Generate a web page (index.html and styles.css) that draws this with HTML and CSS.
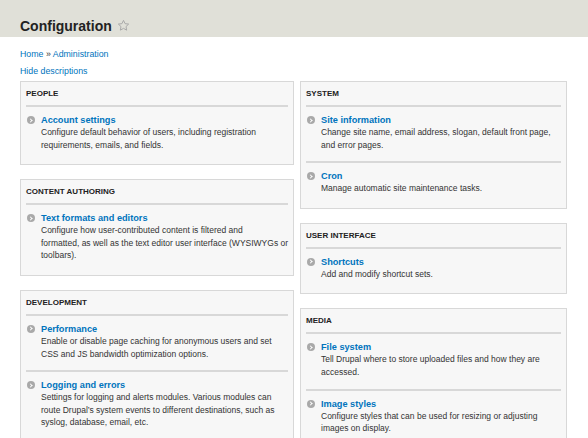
FILE: index.html
```html
<!DOCTYPE html>
<html lang="en">
<head>
    <meta charset="UTF-8">
    <title>Configuration</title>
    <link rel="stylesheet" href="styles.css">
</head>
<body>
    <div class="page-header">
        <h1 class="page-title">Configuration
            <svg class="star" width="13" height="13" viewBox="0 0 24 24"><path d="M12 2.5l2.9 6.1 6.6.8-4.9 4.6 1.3 6.6L12 17.3l-5.9 3.3 1.3-6.6-4.9-4.6 6.6-.8z" fill="none" stroke="#a8a8a8" stroke-width="1.8" stroke-linejoin="round"/></svg>
        </h1>
    </div>

    <div class="content">
        <div class="breadcrumb"><a href="#">Home</a> » <a href="#">Administration</a></div>
        <div class="toggle"><a href="#">Hide descriptions</a></div>

        <div class="columns">
            <div class="column">
                <div class="panel">
                    <h3 class="panel-title">People</h3>
                    <div class="item">
                        <a class="item-link" href="#"><span class="bullet"></span>Account settings</a>
                        <div class="item-desc">Configure default behavior of users, including registration requirements, emails, and fields.</div>
                    </div>
                </div>

                <div class="panel">
                    <h3 class="panel-title">Content authoring</h3>
                    <div class="item">
                        <a class="item-link" href="#"><span class="bullet"></span>Text formats and editors</a>
                        <div class="item-desc tight">Configure how user-contributed content is filtered and<br>formatted, as well as the text editor user interface (WYSIWYGs or<br>toolbars).</div>
                    </div>
                </div>

                <div class="panel">
                    <h3 class="panel-title">Development</h3>
                    <div class="item">
                        <a class="item-link" href="#"><span class="bullet"></span>Performance</a>
                        <div class="item-desc">Enable or disable page caching for anonymous users and set CSS and JS bandwidth optimization options.</div>
                    </div>
                    <div class="item">
                        <a class="item-link" href="#"><span class="bullet"></span>Logging and errors</a>
                        <div class="item-desc">Settings for logging and alerts modules. Various modules can route Drupal’s system events to different destinations, such as syslog, database, email, etc.</div>
                    </div>
                    <div class="item">
                        <a class="item-link" href="#"><span class="bullet"></span>Maintenance mode</a>
                        <div class="item-desc">Take the site offline for maintenance or bring it back online.</div>
                    </div>
                </div>
            </div>

            <div class="column">
                <div class="panel">
                    <h3 class="panel-title">System</h3>
                    <div class="item">
                        <a class="item-link" href="#"><span class="bullet"></span>Site information</a>
                        <div class="item-desc">Change site name, email address, slogan, default front page, and error pages.</div>
                    </div>
                    <div class="item">
                        <a class="item-link" href="#"><span class="bullet"></span>Cron</a>
                        <div class="item-desc">Manage automatic site maintenance tasks.</div>
                    </div>
                </div>

                <div class="panel">
                    <h3 class="panel-title">User interface</h3>
                    <div class="item">
                        <a class="item-link" href="#"><span class="bullet"></span>Shortcuts</a>
                        <div class="item-desc">Add and modify shortcut sets.</div>
                    </div>
                </div>

                <div class="panel">
                    <h3 class="panel-title">Media</h3>
                    <div class="item">
                        <a class="item-link" href="#"><span class="bullet"></span>File system</a>
                        <div class="item-desc">Tell Drupal where to store uploaded files and how they are accessed.</div>
                    </div>
                    <div class="item">
                        <a class="item-link" href="#"><span class="bullet"></span>Image styles</a>
                        <div class="item-desc">Configure styles that can be used for resizing or adjusting images on display.</div>
                    </div>
                    <div class="item">
                        <a class="item-link" href="#"><span class="bullet"></span>Image toolkit</a>
                        <div class="item-desc">Choose which image toolkit to use if you have installed optional toolkits.</div>
                    </div>
                </div>
            </div>
        </div>
    </div>
</body>
</html>
```

FILE: styles.css
```css
/* base */
body {
    margin: 0;
    font-family: "Liberation Sans", Arial, sans-serif;
    color: #333;
    background: #fff;
    overflow: hidden;
}

a {
    color: #0074bd;
    text-decoration: none;
}

/* header band */
.page-header {
    background: #e0e0d8;
    height: 37px;
    padding: 0 20px;
    box-sizing: border-box;
}

.page-title {
    margin: 0;
    padding-top: 19px;
    font-size: 14px;
    line-height: 14px;
    font-weight: bold;
    color: #222;
    display: flex;
    align-items: center;
    gap: 5px;
}

.star {
    margin-top: -1px;
}

.content {
    padding: 0 20px;
}

.breadcrumb,
.toggle {
    font-size: 8.8px;
    line-height: 12px;
}

.breadcrumb {
    padding-top: 11px;
}

.toggle {
    padding-top: 5px;
    margin-bottom: 4px;
}

/* two columns of panels */
.columns {
    display: grid;
    grid-template-columns: 274px 267px;
    gap: 6px;
    align-items: start;
}

.panel {
    background: #f7f7f7;
    border: 1px solid #d8d8d8;
    padding: 0 5px 3px;
    margin-bottom: 14px;
}

.panel-title {
    margin: 0;
    padding: 6px 0 5px;
    font-size: 8px;
    line-height: 12px;
    font-weight: bold;
    text-transform: uppercase;
    color: #222;
    border-bottom: 2px solid #d8d8d8;
}

.item {
    padding: 7px 0 10px;
    border-bottom: 2px solid #d8d8d8;
}

.item:last-child {
    border-bottom: none;
}

.item-link {
    display: flex;
    align-items: center;
    font-size: 9.2px;
    line-height: 12px;
    font-weight: bold;
}

.bullet {
    width: 8px;
    height: 8px;
    margin: 0 6px 0 1px;
    border-radius: 50%;
    background: #a9a9a9;
    position: relative;
}

.bullet::after {
    content: "";
    position: absolute;
    left: 1.9px;
    top: 2.5px;
    width: 2px;
    height: 2px;
    border-top: 1.2px solid #fff;
    border-right: 1.2px solid #fff;
    transform: rotate(45deg);
}

.item-desc {
    padding-left: 15px;
    font-size: 8.5px;
    line-height: 12.6px;
    color: #333;
}

/* line breaks are forced here, so let the long line run to the edge */
.item-desc.tight {
    white-space: nowrap;
}
```
